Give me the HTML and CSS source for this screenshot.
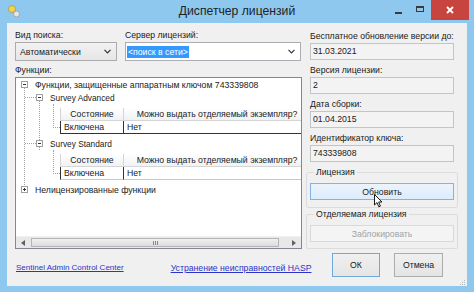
FILE: index.html
```html
<!DOCTYPE html>
<html lang="ru">
<head>
<meta charset="utf-8">
<title>Диспетчер лицензий</title>
<link rel="stylesheet" href="styles.css">
</head>
<body>
<div class="window">
  <div class="titlebar">
    <div class="app-icon">
      <svg width="14" height="14" viewBox="0 0 14 14">
        <circle cx="5" cy="5" r="3.5" fill="#f2d25a" stroke="#b89a2a" stroke-width="0.8"/>
        <path d="M6 7 L12 12 L10.5 13 L8 11 Z" fill="#a9a9a9"/>
        <circle cx="9.5" cy="10" r="3" fill="#e6e6e6" stroke="#9a9a9a" stroke-width="0.8"/>
      </svg>
    </div>
    <div class="title">Диспетчер лицензий</div>
    <div class="controls">
      <span class="ctl min"><span class="min-bar"></span></span>
      <span class="ctl max"><span class="max-box"></span></span>
      <span class="ctl close">
        <svg width="10" height="10" viewBox="0 0 10 10"><path d="M2 2 L8 8 M8 2 L2 8" stroke="#fff" stroke-width="1.8"/></svg>
      </span>
    </div>
  </div>

  <div class="client">
    <div class="left">
      <div class="toprow">
        <div class="field search">
          <div class="label">Вид поиска:</div>
          <div class="combo">
            <span class="combo-text">Автоматически</span>
            <svg class="chev" width="7" height="5" viewBox="0 0 7 5"><path d="M0.5 0.8 L3.5 3.8 L6.5 0.8" fill="none" stroke="#333" stroke-width="1.2"/></svg>
          </div>
        </div>
        <div class="field server">
          <div class="label">Сервер лицензий:</div>
          <div class="combo edit">
            <span class="combo-text"><span class="sel">&lt;поиск в сети&gt;</span></span>
            <svg class="chev" width="7" height="5" viewBox="0 0 7 5"><path d="M0.5 0.8 L3.5 3.8 L6.5 0.8" fill="none" stroke="#333" stroke-width="1.2"/></svg>
          </div>
        </div>
      </div>
      <div class="label fn-label">Функции:</div>
      <div class="tree">
        <div class="tree-body">
          <div class="vline v-root"></div>
          <div class="node lvl0">
            <span class="exp minus"></span><span class="node-text">Функции, защищенные аппаратным ключом 743339808</span>
          </div>
          <div class="sub">
            <div class="vline v-sub"></div>
            <div class="node lvl1">
              <span class="hline"></span><span class="exp minus"></span><span class="node-text latin">Survey Advanced</span>
            </div>
            <div class="grid">
              <div class="gl-vert"></div>
              <div class="grow head">
                <div class="gc c1">Состояние</div>
                <div class="gc c2">Можно выдать отделяемый экземпляр?</div>
              </div>
              <div class="grow data first">
                <span class="gl-h"></span>
                <div class="gc c1">Включена</div>
                <div class="gc c2">Нет</div>
              </div>
            </div>
            <div class="node lvl1">
              <span class="hline"></span><span class="exp minus"></span><span class="node-text latin">Survey Standard</span>
            </div>
            <div class="grid">
              <div class="gl-vert"></div>
              <div class="grow head">
                <div class="gc c1">Состояние</div>
                <div class="gc c2">Можно выдать отделяемый экземпляр?</div>
              </div>
              <div class="grow data">
                <span class="gl-h"></span>
                <div class="gc c1">Включена</div>
                <div class="gc c2">Нет</div>
              </div>
            </div>
          </div>
          <div class="node lvl0 last">
            <span class="exp plus"></span><span class="node-text">Нелицензированные функции</span>
          </div>
        </div>
        <div class="hscroll">
          <span class="arrow left"><svg width="4" height="6" viewBox="0 0 4 6"><path d="M4 0 L0 3 L4 6 Z" fill="#606060"/></svg></span>
          <span class="track"><span class="thumb"><span class="grip"></span></span></span>
          <span class="arrow right"><svg width="4" height="6" viewBox="0 0 4 6"><path d="M0 0 L4 3 L0 6 Z" fill="#606060"/></svg></span>
        </div>
      </div>
    </div>

    <div class="right">
      <div class="rfield">
        <div class="label">Бесплатное обновление версии до:</div>
        <div class="ro">31.03.2021</div>
      </div>
      <div class="rfield">
        <div class="label">Версия лицензии:</div>
        <div class="ro">2</div>
      </div>
      <div class="rfield">
        <div class="label">Дата сборки:</div>
        <div class="ro">01.04.2015</div>
      </div>
      <div class="rfield">
        <div class="label">Идентификатор ключа:</div>
        <div class="ro">743339808</div>
      </div>
      <fieldset class="group g1">
        <legend>Лицензия</legend>
        <div class="btn hover">Обновить
          <svg class="cursor" width="9" height="14" viewBox="0 0 9 14"><path d="M0.5 0.5 L0.5 11 L3 8.6 L4.8 12.8 L6.4 12.1 L4.7 8 L8 8 Z" fill="#fff" stroke="#000" stroke-width="0.9" stroke-linejoin="round"/></svg>
        </div>
      </fieldset>
      <fieldset class="group g2">
        <legend>Отделяемая лицензия</legend>
        <div class="btn disabled">Заблокировать</div>
      </fieldset>
    </div>

    <div class="footer">
      <a class="link l1 latin-link" href="#">Sentinel Admin Control Center</a>
      <a class="link l2" href="#">Устранение неисправностей HASP</a>
      <div class="btn big ok">ОК</div>
      <div class="btn big cancel">Отмена</div>
      <div class="gripper">
        <svg width="7" height="7" viewBox="0 0 7 7"><g fill="#b8b8b8"><rect x="5" y="1" width="1" height="1"/><rect x="3" y="3" width="1" height="1"/><rect x="5" y="3" width="1" height="1"/><rect x="1" y="5" width="1" height="1"/><rect x="3" y="5" width="1" height="1"/><rect x="5" y="5" width="1" height="1"/></g></svg>
      </div>
    </div>
  </div>
</div>
</body>
</html>
```

FILE: styles.css
```css
* { box-sizing: border-box; }
html, body { margin: 0; padding: 0; }
body {
  width: 474px;
  height: 292px;
  overflow: hidden;
  font-family: "Liberation Sans", Arial, sans-serif;
  font-size: 8.7px;
  color: #1a1a1a;
  background: #8cc7ee;
}
.window {
  width: 474px;
  height: 292px;
  background: #8ec8ef;
  padding: 0 7px 6px 7px;
  display: flex;
  flex-direction: column;
}
.titlebar {
  height: 23px;
  display: flex;
  align-items: flex-start;
  margin: 0 -7px;
  position: relative;
}
.app-icon {
  width: 14px;
  height: 14px;
  margin: 4px 0 0 7px;
}
.title {
  position: absolute;
  left: 0;
  right: 0;
  top: 4px;
  text-align: center;
  font-size: 12.2px;
  color: #222;
  pointer-events: none;
}
.controls {
  margin-left: auto;
  display: flex;
  align-items: flex-start;
}
.ctl {
  height: 20px;
  display: flex;
  align-items: center;
  justify-content: center;
}
.min { width: 22px; }
.min-bar { width: 7px; height: 2px; background: #3a3a3a; margin-top: 5px; }
.max { width: 22px; }
.max-box { width: 8px; height: 6px; border: 1px solid #3a3a3a; border-top-width: 2px; margin-top: -2px; }
.close { width: 38px; background: #c8453f; margin-right: 5px; }

.client {
  flex: 1;
  background: #f0f0f0;
  display: grid;
  grid-template-columns: 287px 152px;
  grid-template-rows: 220px 24px;
  column-gap: 4px;
  row-gap: 4px;
  padding: 6px 0 0 8px;
}
.label { line-height: 13px; height: 13px; white-space: nowrap; }

.left { display: flex; flex-direction: column; }
.toprow { display: flex; gap: 8px; }
.search { width: 102px; }
.server { width: 176px; }
.combo {
  height: 19px;
  border: 1px solid #acacac;
  background: linear-gradient(#f2f2f2, #e6e6e6);
  display: flex;
  align-items: center;
  padding: 0 5px 0 4px;
}
.combo.edit { background: #fff; border-color: #abadb3; padding-left: 1px; }
.combo-text { flex: 1; white-space: nowrap; }
.sel { background: #3399ff; color: #fff; padding: 1px 1px; }
.chev { flex: none; }
.fn-label { margin-top: 2px; line-height: 14px; height: 14px; }

.tree {
  flex: 1;
  border: 1px solid #828790;
  background: #fff;
  display: flex;
  flex-direction: column;
  overflow: hidden;
}
.tree-body {
  flex: 1;
  position: relative;
  overflow: hidden;
}
.node {
  height: 13px;
  display: flex;
  align-items: center;
  white-space: nowrap;
  position: relative;
}
.latin { font-size: 8.3px; }
.lvl0 { padding-left: 5px; }
.lvl1 { padding-left: 20px; }
.exp {
  width: 7px;
  height: 7px;
  border: 1px solid #a0a0a0;
  background: #fff;
  position: relative;
  margin-right: 7px;
  flex: none;
  z-index: 1;
}
.exp::before {
  content: "";
  position: absolute;
  left: 1px; top: 2px;
  width: 3px; height: 1px;
  background: #333;
}
.exp.plus::after {
  content: "";
  position: absolute;
  left: 2px; top: 1px;
  width: 1px; height: 3px;
  background: #333;
}
.vline { position: absolute; width: 0; border-left: 1px dotted #a0a0a0; }
.v-root { left: 8px; top: 9px; height: 102px; }
.sub { position: relative; }
.v-sub { left: 23px; top: 9px; height: 50px; }
.hline {
  position: absolute;
  left: 9px;
  width: 11px;
  top: 6px;
  border-top: 1px dotted #a0a0a0;
}
.grid {
  position: relative;
  margin: 4px 0 3px 44px;
  white-space: nowrap;
}
.gl-vert {
  position: absolute;
  left: -7px;
  top: -4px;
  height: 24px;
  border-left: 1px dotted #a0a0a0;
}
.grow { display: flex; height: 13px; position: relative; }
.gl-h {
  position: absolute;
  left: -7px;
  width: 7px;
  top: 6px;
  border-top: 1px dotted #a0a0a0;
}
.gc {
  flex: none;
  line-height: 12px;
  overflow: hidden;
}
.c1 { width: 64px; }
.c2 { width: 187px; }
.head .gc {
  background: linear-gradient(#ffffff, #f1f2f4);
  border-right: 1px solid #d5d5d5;
  border-bottom: 1px solid #d5d5d5;
  text-align: center;
  color: #222;
}
.head .c1 { border-left: 1px solid #d5d5d5; }
.data .gc { padding-left: 3px; border-bottom: 1px solid #c8c8c8; }
.data .c1 { border-left: 1px solid #333; border-right: 1px solid #333; }
.data.first .gc { border-bottom-color: #333; }

.hscroll {
  height: 12px;
  display: flex;
  background: #e8e8e8;
  border-top: 1px solid #f0f0f0;
}
.arrow { width: 14px; display: flex; align-items: center; justify-content: center; }
.track { flex: 1; display: flex; padding: 1px 1px; }
.thumb {
  width: 248px;
  background: linear-gradient(#f0f0f0, #dcdcdc);
  border: 1px solid #b5b5b5;
  display: flex;
  align-items: center;
  justify-content: center;
}
.grip { width: 5px; height: 4px; border-left: 1px solid #888; border-right: 1px solid #888; position: relative; }
.grip::after { content: ""; position: absolute; left: 1px; top: 0; width: 1px; height: 4px; background: #888; }

.right { display: flex; flex-direction: column; }
.rfield { padding: 0 4px; margin-bottom: 3px; }
.rfield .label { height: 14px; line-height: 14px; }
.ro {
  height: 17px;
  border: 1px solid #c4c4c4;
  background: #f3f3f3;
  line-height: 15px;
  padding-left: 2px;
}
.group {
  margin: 0;
  border: 1px solid #dcdcdc;
  border-radius: 2px;
  padding: 4px 3px 7px 3px;
}
.group legend {
  padding: 0 2px;
  margin-left: 4px;
  line-height: 13px;
}
.g1 { margin-top: 1px; }
.g2 { margin-top: 0; padding-bottom: 6px; }
.btn {
  height: 17px;
  border: 1px solid #acacac;
  background: linear-gradient(#f0f0f0, #e5e5e5);
  display: flex;
  align-items: center;
  justify-content: center;
  position: relative;
  white-space: nowrap;
}
.btn.hover { background: linear-gradient(#ecf4fc, #dcecfc); border-color: #7eb4ea; }
.btn.disabled { background: #f4f4f4; border-color: #d9d9d9; color: #a3a3a3; }
.cursor { position: absolute; left: 63px; top: 10px; }

.footer {
  grid-column: 1 / 3;
  display: flex;
  align-items: flex-start;
  position: relative;
}
.link { color: #2b34c6; text-decoration: underline; margin-top: 10px; white-space: nowrap; }
.latin-link { font-size: 8px; }
.l1 { margin-left: 1px; }
.l2 { margin-left: 47px; }
.btn.big { height: 24px; width: 48px; }
.ok { margin-left: auto; border-color: #6fa8dc; }
.cancel { width: 49px !important; margin-left: 14px; margin-right: 15px; }
.gripper { position: absolute; right: -8px; bottom: -8px; width: 7px; height: 7px; }
```
